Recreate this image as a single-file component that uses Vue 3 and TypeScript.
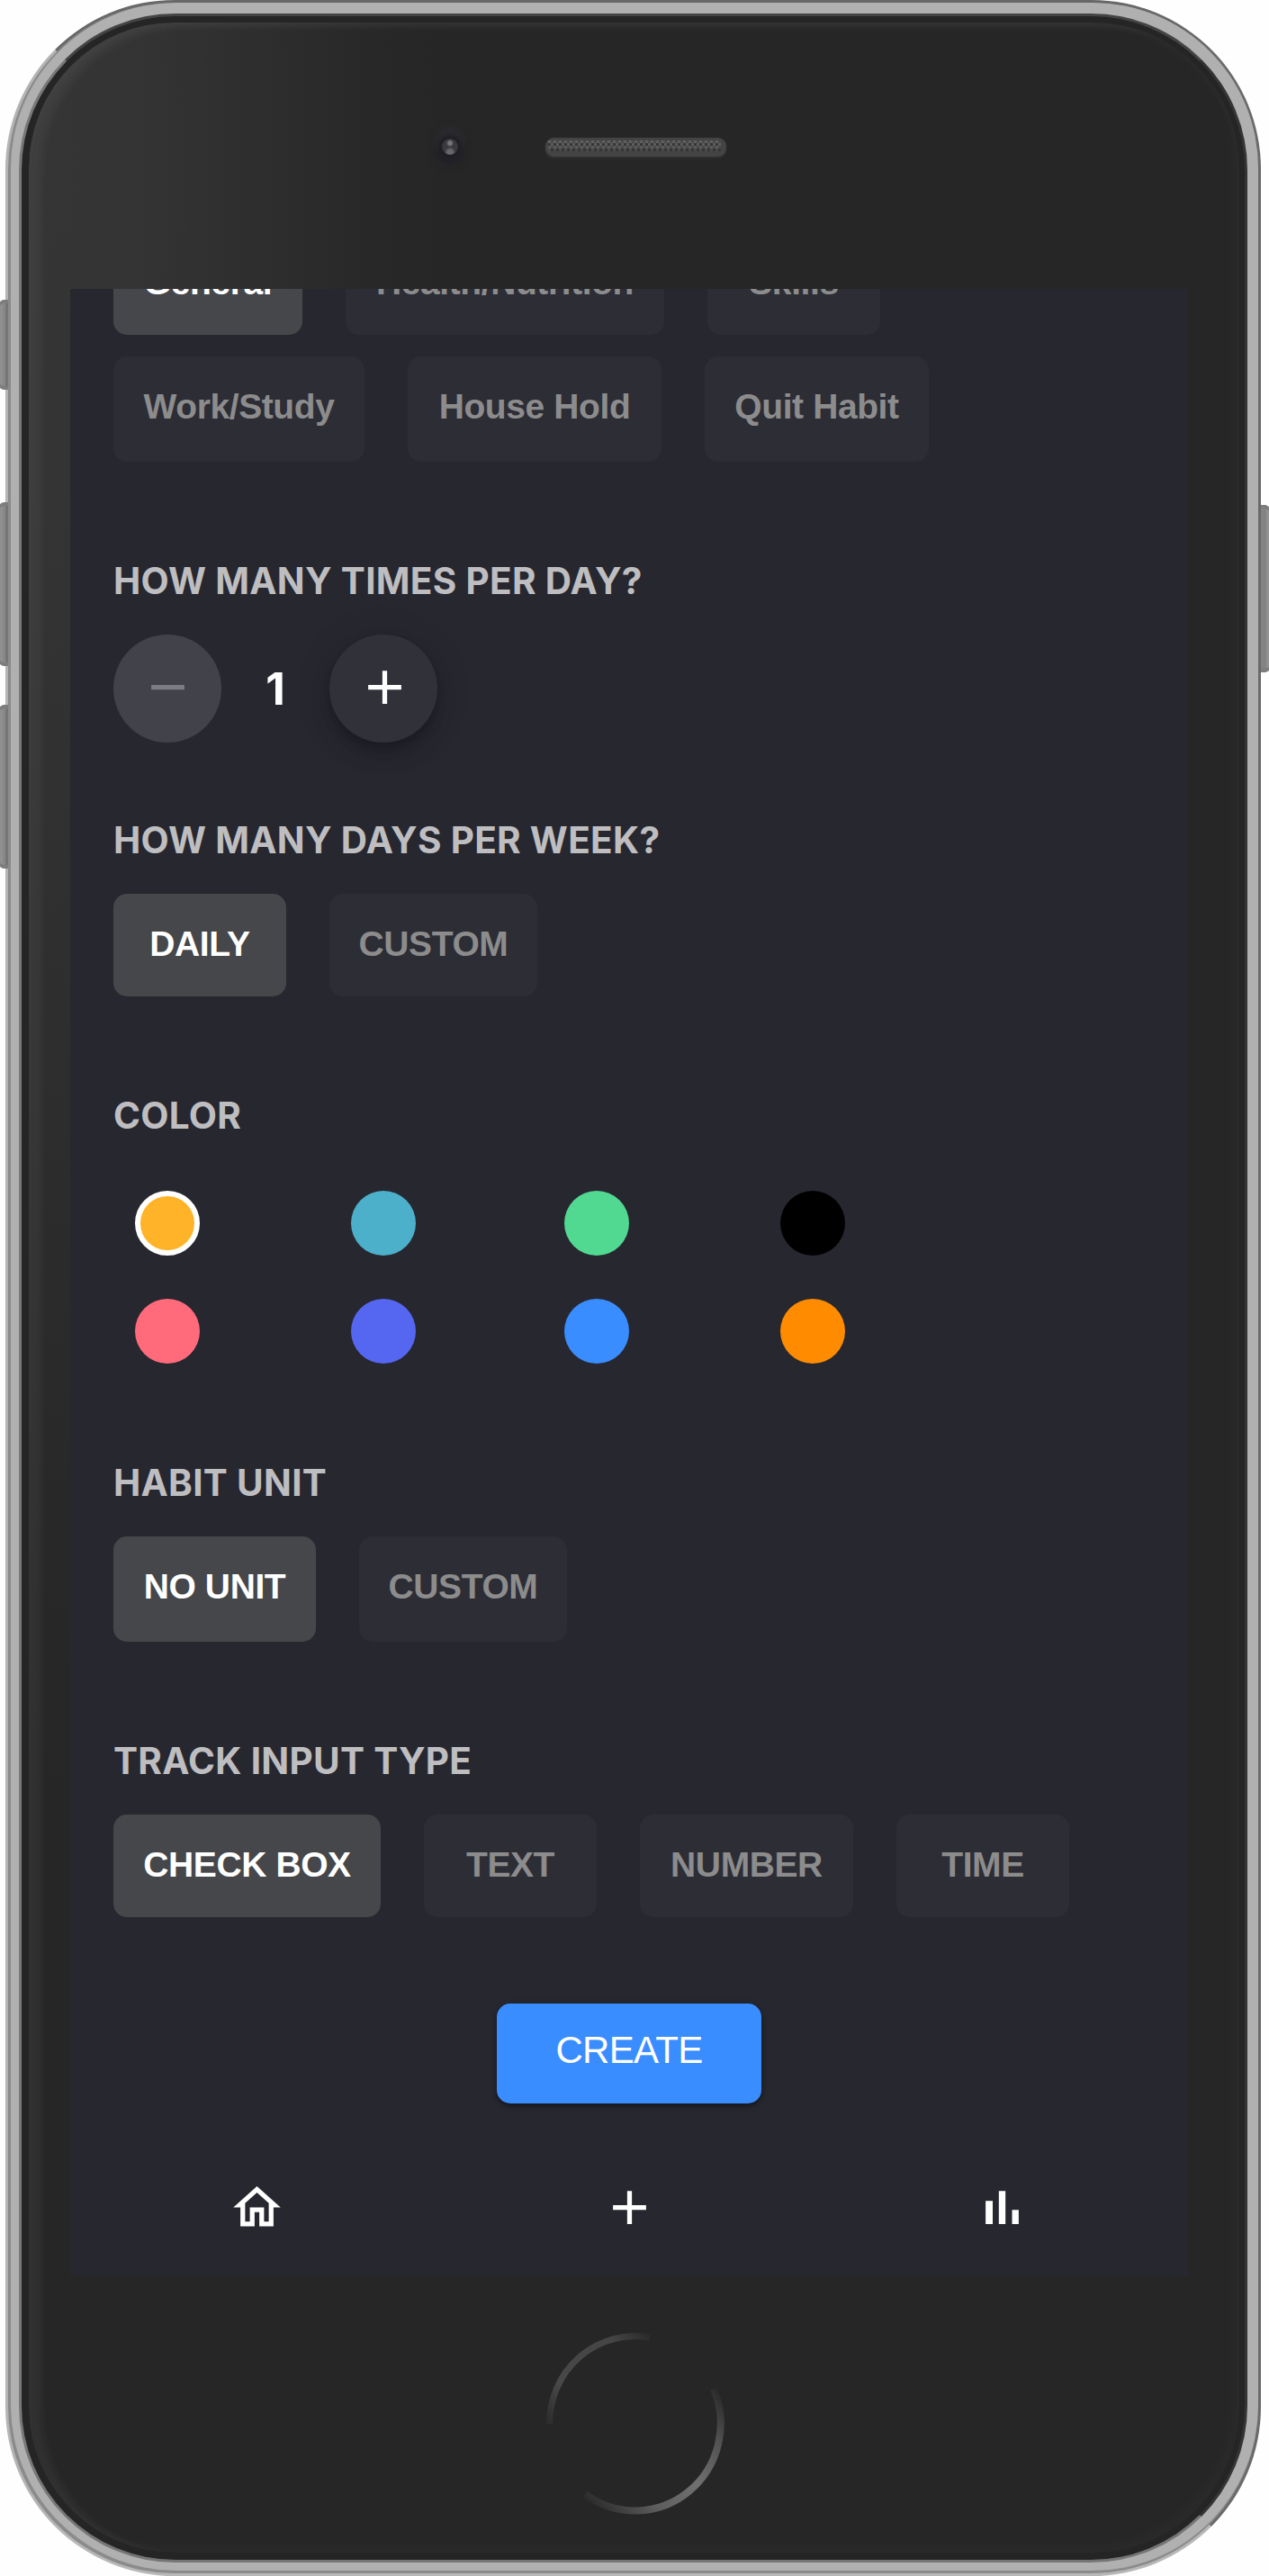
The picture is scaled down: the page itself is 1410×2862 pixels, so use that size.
<script setup lang="ts">
import { ref } from 'vue'

interface Chip {
  label: string
  width: number
}

interface ChipRow {
  tall: boolean
  chips: Chip[]
}

interface Swatch {
  name: string
  value: string
}

const categoryRows: ChipRow[] = [
  {
    tall: false,
    chips: [
      { label: 'General', width: 210 },
      { label: 'Health/Nutrition', width: 354 },
      { label: 'Skills', width: 192 },
    ],
  },
  {
    tall: true,
    chips: [
      { label: 'Work/Study', width: 279 },
      { label: 'House Hold', width: 282 },
      { label: 'Quit Habit', width: 249 },
    ],
  },
]

const frequencies: Chip[] = [
  { label: 'DAILY', width: 192 },
  { label: 'CUSTOM', width: 231 },
]

const units: Chip[] = [
  { label: 'NO UNIT', width: 225 },
  { label: 'CUSTOM', width: 231 },
]

const inputTypes: Chip[] = [
  { label: 'CHECK BOX', width: 297 },
  { label: 'TEXT', width: 192 },
  { label: 'NUMBER', width: 237 },
  { label: 'TIME', width: 192 },
]

const swatches: Swatch[] = [
  { name: 'amber', value: '#ffb329' },
  { name: 'teal', value: '#4db0cb' },
  { name: 'green', value: '#51d991' },
  { name: 'black', value: '#000000' },
  { name: 'coral', value: '#ff6b7b' },
  { name: 'indigo', value: '#5567f1' },
  { name: 'blue', value: '#3a8dff' },
  { name: 'orange', value: '#ff8c00' },
]

const category = ref('General')
const times = ref(1)
const frequency = ref('DAILY')
const color = ref('amber')
const unit = ref('NO UNIT')
const inputType = ref('CHECK BOX')
</script>

<template>
  <div class="stage">
    <span class="key key-mute"></span>
    <span class="key key-up"></span>
    <span class="key key-down"></span>
    <div class="rim rim-a">
      <div class="rim rim-b">
        <div class="rim rim-c">
          <div class="rim rim-d">
            <div class="face">
              <div class="forehead">
                <span class="camera"></span>
                <svg class="speaker" width="201" height="22" viewBox="0 0 201 22">
                  <defs>
                    <pattern id="mesh" x="3" y="3" width="6" height="12" patternUnits="userSpaceOnUse">
                      <rect width="6" height="12" fill="#4a4a4a" />
                      <rect width="3" height="3" fill="#606060" />
                      <rect x="3" y="3" width="3" height="3" fill="#5c5c5c" />
                      <rect y="3" width="3" height="3" fill="#363636" />
                      <rect y="6" width="3" height="3" fill="#5a5a5a" />
                      <rect x="3" y="9" width="3" height="3" fill="#343434" />
                    </pattern>
                  </defs>
                  <rect width="201" height="21" rx="9" fill="#444" />
                  <rect x="3" y="3" width="192" height="12" fill="url(#mesh)" />
                </svg>
              </div>

              <div class="screen">
                <main class="form">
                  <div v-for="(row, i) in categoryRows" :key="i" class="chips" :class="{ tall: row.tall }">
                    <button
                      v-for="chip in row.chips"
                      :key="chip.label"
                      class="chip"
                      :class="{ active: chip.label === category }"
                      :style="{ width: chip.width + 'px' }"
                      @click="category = chip.label"
                    >{{ chip.label }}</button>
                  </div>

                  <h2>HOW MANY TIMES PER DAY?</h2>
                  <div class="stepper">
                    <button class="round muted" :disabled="times <= 1" @click="times--">
                      <svg viewBox="0 0 24 24"><path d="M19 13H5v-2h14v2z" /></svg>
                    </button>
                    <span class="count">{{ times }}</span>
                    <button class="round raised" @click="times++">
                      <svg viewBox="0 0 24 24"><path d="M19 13h-6v6h-2v-6H5v-2h6V5h2v6h6v2z" /></svg>
                    </button>
                  </div>

                  <h2 class="after-stepper">HOW MANY DAYS PER WEEK?</h2>
                  <div class="chips">
                    <button
                      v-for="chip in frequencies"
                      :key="chip.label"
                      class="chip"
                      :class="{ active: chip.label === frequency }"
                      :style="{ width: chip.width + 'px' }"
                      @click="frequency = chip.label"
                    >{{ chip.label }}</button>
                  </div>

                  <h2>COLOR</h2>
                  <div class="swatches">
                    <button
                      v-for="swatch in swatches"
                      :key="swatch.name"
                      class="swatch"
                      :class="{ picked: swatch.name === color }"
                      :style="{ backgroundColor: swatch.value }"
                      @click="color = swatch.name"
                    ></button>
                  </div>

                  <h2>HABIT UNIT</h2>
                  <div class="chips tall">
                    <button
                      v-for="chip in units"
                      :key="chip.label"
                      class="chip"
                      :class="{ active: chip.label === unit }"
                      :style="{ width: chip.width + 'px' }"
                      @click="unit = chip.label"
                    >{{ chip.label }}</button>
                  </div>

                  <h2>TRACK INPUT TYPE</h2>
                  <div class="chips">
                    <button
                      v-for="chip in inputTypes"
                      :key="chip.label"
                      class="chip"
                      :class="{ active: chip.label === inputType }"
                      :style="{ width: chip.width + 'px' }"
                      @click="inputType = chip.label"
                    >{{ chip.label }}</button>
                  </div>

                  <button class="create">CREATE</button>
                </main>

                <nav class="tabs">
                  <svg viewBox="0 0 24 24">
                    <path d="M12 5.69l5 4.5V18h-2v-6H9v6H7v-7.81l5-4.5M12 3L2 12h3v8h6v-6h2v6h6v-8h3L12 3z" />
                  </svg>
                  <svg viewBox="0 0 24 24"><path d="M19 13h-6v6h-2v-6H5v-2h6V5h2v6h6v2z" /></svg>
                  <svg viewBox="0 0 24 24">
                    <path d="M5 9.2h3V19H5V9.2zM10.6 5h2.8v14h-2.8V5zm5.6 8H19v6h-2.8v-6z" />
                  </svg>
                </nav>
              </div>

              <div class="chin">
                <svg class="home-ring" width="212" height="212" viewBox="0 0 212 212">
                  <defs>
                    <linearGradient id="upper" gradientUnits="userSpaceOnUse" x1="4" y1="112" x2="128" y2="6">
                      <stop offset="0" stop-color="#262626" />
                      <stop offset="0.28" stop-color="#484848" />
                      <stop offset="0.75" stop-color="#454545" />
                      <stop offset="1" stop-color="#262626" />
                    </linearGradient>
                    <linearGradient id="lower" gradientUnits="userSpaceOnUse" x1="46" y1="192" x2="196" y2="62">
                      <stop offset="0" stop-color="#262626" />
                      <stop offset="0.3" stop-color="#5e5e5e" />
                      <stop offset="0.55" stop-color="#707070" />
                      <stop offset="0.8" stop-color="#525252" />
                      <stop offset="1" stop-color="#262626" />
                    </linearGradient>
                  </defs>
                  <path d="M10.5 106A95 97 0 0 1 122 10" fill="none" stroke="url(#upper)" stroke-width="7" />
                  <path d="M193 67A95 97 0 0 1 50 184" fill="none" stroke="url(#lower)" stroke-width="8" />
                </svg>
              </div>
            </div>
          </div>
        </div>
      </div>
    </div>
    <span class="key key-power"></span>
  </div>
</template>

<style>
body {
  margin: 0;
  background: #fefefe;
}
</style>

<style scoped>
.stage {
  position: relative;
  width: 1410px;
  height: 2862px;
  padding: 0 9px 0 6px;
  box-sizing: border-box;
  overflow: hidden;
  background: #fefefe;
}

.key {
  position: absolute;
  left: 0;
  width: 9px;
  background: linear-gradient(to right, #909090 0 3px, #888 3px 6px, #757575 6px);
  border-radius: 6px 0 0 6px / 3px 0 0 3px;
  box-shadow: inset 0 4px #7d7d7d, inset 0 -4px #7d7d7d;
  z-index: 1;
}
.key-mute {
  top: 333px;
  height: 100px;
}
.key-up {
  top: 558px;
  height: 182px;
}
.key-down {
  top: 783px;
  height: 182px;
}
.key-power {
  top: 561px;
  left: auto;
  right: 0;
  height: 186px;
  background: linear-gradient(to right, #838383 0 6px, #929292 6px);
  border-radius: 0 6px 6px 0 / 0 3px 3px 0;
}

.rim {
  box-sizing: border-box;
  height: 100%;
}
.rim-a {
  border: 3px solid;
  border-color: #686868 #6a6a6a #b8b8b8 #b4b4b4;
  border-radius: 188px;
  background: #8b8b8b;
}
.rim-b {
  padding: 0 0 3px 3px;
}
.rim-c {
  background: #b0b0b0;
  border-radius: 184px;
  padding: 12px 12px 9px 9px;
}
.rim-d {
  background: #252525;
  border: 3px solid;
  border-color: #434443 #343434 #757575 #787878;
  border-radius: 174px;
  padding: 7px 6px 8px 8px;
}

.face {
  height: 100%;
  display: flex;
  flex-direction: column;
  border-radius: 162px;
  background: radial-gradient(ellipse 440px 1900px at 30px 160px, #353535 0, #333 25%, #2d2d2d 55%, #272727 85%, #262626 100%) #262626;
  box-shadow: inset 14px 4px 10px rgba(255, 255, 255, 0.05), inset -8px -8px 12px rgba(255, 255, 255, 0.018),
    inset 0 6px 10px rgba(255, 255, 255, 0.025);
}

.forehead {
  flex: 0 0 296px;
  display: flex;
  align-items: flex-start;
  padding: 128px 0 0 459px;
  box-sizing: border-box;
}
.camera {
  width: 18px;
  height: 18px;
  margin: 1px 97px 0 0;
  border-radius: 50%;
  background: radial-gradient(circle at 50% 28%, #777 0 2px, transparent 4px),
    radial-gradient(circle at 50% 85%, #68686c 0 3px, transparent 6px), #39393e;
  box-shadow: 0 0 4px 4px #1f1e24, 0 -6px 6px 7px #2c2b30, 0 6px 8px 6px #232229;
}
.speaker {
  filter: drop-shadow(0 2px 1px #303030);
}

.screen {
  flex: 0 0 2208px;
  width: 1242px;
  margin-left: 46px;
  display: flex;
  flex-direction: column;
  background: #272730;
  overflow: hidden;
}

.form {
  display: flex;
  flex-direction: column;
  margin-top: -63px;
  padding: 0 48px;
}

button {
  border: 0;
  padding: 0;
  margin: 0;
  cursor: pointer;
}

.chips {
  display: flex;
  gap: 48px;
  height: 114px;
}
.chips + .chips {
  margin-top: 24px;
}
.chips.tall {
  height: 117px;
}
.chip {
  display: flex;
  flex-shrink: 0;
  justify-content: center;
  align-items: flex-start;
  border-radius: 15px;
  background: #2d2d36;
  color: #8c8c8c;
  font: 700 39px/111px 'Liberation Sans', Arial, sans-serif;
  letter-spacing: -0.4px;
  white-space: nowrap;
}
.chip.active {
  background: #46474a;
  color: #fff;
}

h2 {
  margin: 108px 0 36px;
  height: 48px;
  color: #bebec0;
  font: 650 40.5px/50px Inter, sans-serif;
  letter-spacing: 0.3px;
  white-space: nowrap;
}
h2.after-stepper {
  margin-top: 84px;
}

.stepper {
  display: flex;
  height: 120px;
}
.round {
  width: 120px;
  height: 120px;
  border-radius: 50%;
  display: flex;
  align-items: center;
  justify-content: center;
}
.round svg {
  width: 63px;
  height: 63px;
  margin-bottom: 3px;
}
.muted {
  background: #42424a;
}
.muted path {
  fill: #7c7c82;
}
.raised {
  background: #31313a;
  box-shadow: 0 9px 15px -3px rgba(0, 0, 0, 0.2), 0 12px 24px rgba(0, 0, 0, 0.14), 0 3px 48px rgba(0, 0, 0, 0.08);
}
.raised svg {
  margin-left: 3px;
}
.raised path {
  fill: #fff;
}
.count {
  width: 120px;
  text-align: center;
  color: #fff;
  font: 700 50px/120px Inter, sans-serif;
}

.swatches {
  display: grid;
  grid-template-columns: 240px 237px 240px 240px;
  grid-auto-rows: 72px;
  row-gap: 48px;
  padding: 24px 0 0 24px;
}
.swatch {
  width: 72px;
  height: 72px;
  box-sizing: border-box;
  border-radius: 50%;
}
.swatch.picked {
  border: 6px solid #fff;
}

.create {
  align-self: center;
  display: flex;
  justify-content: center;
  align-items: flex-start;
  width: 294px;
  height: 111px;
  margin-top: 96px;
  border-radius: 15px;
  background: #3a8dff;
  color: #fff;
  font: 400 42px/103px 'Liberation Sans', Arial, sans-serif;
  letter-spacing: -0.7px;
  box-shadow: 0 3px 4px rgba(0, 0, 0, 0.3), 0 2px 9px rgba(0, 0, 0, 0.2);
}

.tabs {
  display: grid;
  grid-template-columns: repeat(3, 1fr);
  justify-items: center;
  padding-top: 84px;
}
.tabs svg {
  width: 63px;
  height: 63px;
  fill: #fff;
}

.chin {
  display: flex;
  padding: 58px 0 0 568px;
}
</style>
